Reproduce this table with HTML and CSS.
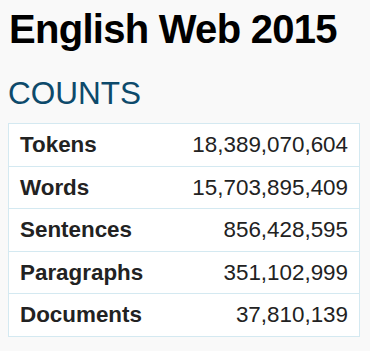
FILE: index.html
```html
<!DOCTYPE html>
<html lang="en">
<head>
<meta charset="utf-8">
<title>English Web 2015</title>
<link rel="stylesheet" href="styles.css">
</head>
<body>
<main class="page">
  <h1 class="title">English Web 2015</h1>
  <h2 class="section">COUNTS</h2>
  <table class="counts">
    <tbody>
      <tr><th>Tokens</th><td>18,389,070,604</td></tr>
      <tr><th>Words</th><td>15,703,895,409</td></tr>
      <tr><th>Sentences</th><td>856,428,595</td></tr>
      <tr><th>Paragraphs</th><td>351,102,999</td></tr>
      <tr><th>Documents</th><td>37,810,139</td></tr>
    </tbody>
  </table>
</main>
</body>
</html>
```
FILE: styles.css
```css
html, body {
  margin: 0;
  padding: 0;
  background: #f9f9f9;
}
body {
  font-family: "Liberation Sans", Arial, sans-serif;
  color: #222;
}
.page {
  padding: 7px 10px 0 8px;
}
.title {
  margin: 0 0 0 1px;
  font-size: 40px;
  line-height: 44px;
  font-weight: bold;
  letter-spacing: -0.72px;
  color: #000;
}
.section {
  margin: 24px 0 0 0;
  font-size: 31.5px;
  line-height: 36px;
  font-weight: normal;
  color: #0d4a6b;
}
.counts {
  margin-top: 12px;
  width: 100%;
  border-collapse: collapse;
  background: #fff;
  border: 1px solid #d4e9f1;
}
.counts th,
.counts td {
  border-top: 1px solid #d4e9f1;
  padding: 6px 11px 6px 11px;
  font-size: 22.4px;
  line-height: 29.6px;
  color: #222;
}
.counts th {
  text-align: left;
  font-weight: bold;
}
.counts td {
  text-align: right;
  font-weight: normal;
}
```
